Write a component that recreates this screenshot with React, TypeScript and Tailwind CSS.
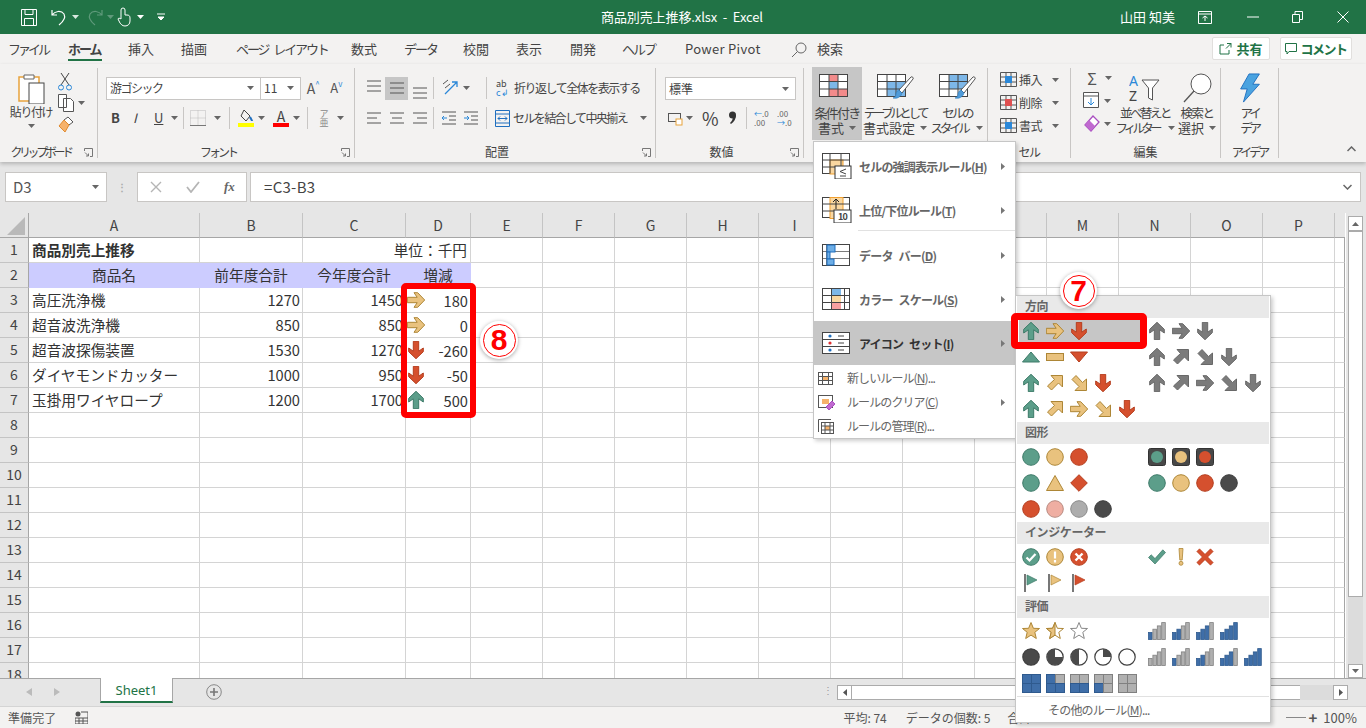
import React from "react";

const Caret = ({ c = "#666" }: { c?: string }) => (
  <svg width="7" height="4" viewBox="0 0 7 4" className="shrink-0"><path d="M0 0h7L3.5 4z" fill={c} /></svg>
);

const COL: Record<string, [string, string]> = {
  g: ["#5c9e8a", "#3d7a68"],
  y: ["#e9c27e", "#ad8636"],
  r: ["#d5502e", "#b53e1e"],
  k: ["#7b7b7b", "#686868"],
  d: ["#4a4a4a", "#3c3c3c"],
};

const Arr = ({ c, a = 0 }: { c: string; a?: number }) => (
  <svg width="18" height="18" viewBox="-9 -9 18 18">
    <polygon transform={`rotate(${a})`} points="0,-8.7 7.3,-1.7 7.3,2 2.7,-1.2 2.7,8.7 -2.7,8.7 -2.7,-1.2 -7.3,2 -7.3,-1.7" fill={COL[c][0]} stroke={COL[c][1]} strokeWidth="1" />
  </svg>
);
const Dia = ({ c, a = 0 }: { c: string; a?: number }) => (
  <svg width="18" height="18" viewBox="-9 -9 18 18">
    <polygon transform={`rotate(${a})`} points="-4,-7.5 7.5,-7.5 7.5,4 3.5,0 -3.5,7 -7.5,3 -0.5,-3.5" fill={COL[c][0]} stroke={COL[c][1]} strokeWidth="1" />
  </svg>
);
const Tri = ({ c, down }: { c: string; down?: boolean }) => (
  <svg width="18" height="14" viewBox="0 0 18 14"><polygon points={down ? "0.5,2 17.5,2 9,12" : "9,2 17.5,12 0.5,12"} fill={COL[c][0]} stroke={COL[c][1]} /></svg>
);
const Bar = () => (
  <svg width="18" height="10" viewBox="0 0 18 10"><rect x="0.5" y="1.5" width="17" height="7" fill={COL.y[0]} stroke={COL.y[1]} /></svg>
);
const Dot = ({ c, f }: { c?: string; f?: [string, string] }) => {
  const v = f || COL[c || "g"];
  return <svg width="18" height="18" viewBox="0 0 18 18"><circle cx="9" cy="9" r="8.3" fill={v[0]} stroke={v[1]} /></svg>;
};
const TriS = () => (
  <svg width="18" height="18" viewBox="0 0 18 18"><polygon points="9,1.5 17.5,16.5 0.5,16.5" fill={COL.y[0]} stroke={COL.y[1]} /></svg>
);
const Rhomb = () => (
  <svg width="18" height="18" viewBox="0 0 18 18"><polygon points="9,0.7 17.3,9 9,17.3 0.7,9" fill={COL.r[0]} stroke={COL.r[1]} strokeLinejoin="round" /></svg>
);
const Light = ({ c }: { c: string }) => (
  <svg width="18" height="18" viewBox="0 0 18 18"><rect x="0.5" y="0.5" width="17" height="17" rx="2" fill="#484848" stroke="#333" /><circle cx="9" cy="9" r="6" fill={COL[c][0]} /></svg>
);
const CircI = ({ c, k }: { c: string; k: string }) => (
  <svg width="18" height="18" viewBox="0 0 18 18">
    <circle cx="9" cy="9" r="8.3" fill={COL[c][0]} stroke={COL[c][1]} />
    {k === "v" && <path d="M4.5 9.5l3 3 6-6.5" fill="none" stroke="#fff" strokeWidth="2.2" />}
    {k === "!" && <path d="M9 3.5v7M9 12v2.5" fill="none" stroke="#fff" strokeWidth="2.2" />}
    {k === "x" && <path d="M5.5 5.5l7 7M12.5 5.5l-7 7" fill="none" stroke="#fff" strokeWidth="2.4" />}
  </svg>
);
const Check = () => (
  <svg width="18" height="18" viewBox="0 0 18 18"><path d="M0.5 9.5l2.7-2.7 3.8 3.8L14.8 1.8 17.5 4.5 7 16z" fill={COL.g[0]} stroke={COL.g[1]} strokeWidth=".7" /></svg>
);
const Excl = () => (
  <svg width="18" height="18" viewBox="0 0 18 18"><path d="M7 0.5h4L10.2 12H7.8z" fill={COL.y[0]} stroke={COL.y[1]} strokeWidth=".8" /><circle cx="9" cy="15.3" r="2" fill={COL.y[0]} stroke={COL.y[1]} strokeWidth=".8" /></svg>
);
const Cross = () => (
  <svg width="18" height="18" viewBox="0 0 18 18"><path d="M0.8 3.5l2.7-2.7L9 6.3 14.5 .8l2.7 2.7L11.7 9l5.5 5.5-2.7 2.7L9 11.7l-5.5 5.5-2.7-2.7L6.3 9z" fill={COL.r[0]} stroke={COL.r[1]} strokeWidth=".6" /></svg>
);
const Flag = ({ c }: { c: string }) => (
  <svg width="18" height="20" viewBox="0 0 18 20"><rect x="2" y="1" width="2" height="18" fill="#777" /><polygon points="5,2 15,7 5,12" fill={COL[c][0]} stroke={COL[c][1]} strokeWidth=".7" /></svg>
);
const STAR = "0,-8.5 2.4,-2.7 8.5,-2.5 3.8,1.3 5.3,7.5 0,4.1 -5.3,7.5 -3.8,1.3 -8.5,-2.5 -2.4,-2.7";
const Star = ({ f }: { f: number }) => (
  <svg width="18" height="18" viewBox="-9 -9 18 18">
    <polygon points={STAR} fill={f === 2 ? COL.y[0] : "#fff"} stroke={f === 0 ? "#888" : COL.y[1]} />
    {f === 1 && <polygon points="0,-8.5 0,4.1 -5.3,7.5 -3.8,1.3 -8.5,-2.5 -2.4,-2.7" fill={COL.y[0]} stroke={COL.y[1]} />}
  </svg>
);
const Ball = ({ n }: { n: number }) => {
  const paths: Record<number, string> = { 3: "M9 9V1A8 8 0 1 0 17 9z", 2: "M9 1A8 8 0 0 0 9 17z", 1: "M9 9V1A8 8 0 0 1 17 9z" };
  return (
    <svg width="18" height="18" viewBox="0 0 18 18">
      <circle cx="9" cy="9" r="8.2" fill={n === 4 ? "#4a4a4a" : "#fff"} stroke="#404040" strokeWidth="1.2" />
      {paths[n] && <path d={paths[n]} fill="#4a4a4a" />}
    </svg>
  );
};
const Sig = ({ n }: { n: number }) => (
  <svg width="18" height="18" viewBox="0 0 18 18">
    {[0, 1, 2, 3].map((i) => (
      <rect key={i} x={0.5 + i * 4.4} y={10.5 - i * 3.3} width="3.6" height={7 + i * 3.3} fill={i < n ? "#3f6ea8" : "#b0b0b0"} stroke={i < n ? "#2f5a8e" : "#808080"} strokeWidth=".8" />
    ))}
  </svg>
);
const Quad = ({ b }: { b: number[] }) => (
  <svg width="19" height="19" viewBox="0 0 19 19">
    {[0, 1, 2, 3].map((i) => (
      <rect key={i} x={0.5 + (i % 2) * 9} y={0.5 + (i > 1 ? 9 : 0)} width="9" height="9" fill={b[i] ? "#3f6ea8" : "#b0b0b0"} stroke={b[i] ? "#2f5a8e" : "#808080"} />
    ))}
  </svg>
);

const Cells = ({ items }: { items: React.ReactNode[] }) => (
  <>{items.map((x, i) => <div key={i} className="w-[24px] h-full flex items-center justify-center shrink-0">{x}</div>)}</>
);
const IRow = ({ l, r, sel }: { l: React.ReactNode[]; r?: React.ReactNode[]; sel?: boolean }) => (
  <div className="flex h-[26px] pl-[3px] items-center">
    <div className={`flex w-[126px] h-full ${sel ? "bg-[#c6c6c6]" : ""}`}><Cells items={l} /></div>
    <div className="flex h-full"><Cells items={r || []} /></div>
  </div>
);
const SecHead = ({ t }: { t: string }) => (
  <div className="h-[22px] mx-px bg-[#e9e9e9] pl-[8px] text-[12px] leading-[20px] font-bold text-[#666] tracking-[-0.4px]">{t}</div>
);

const Brush = ({ x = 14 }: { x?: number }) => (
  <g transform={`translate(${x} 0)`}>
    <path d="M20 3c1-1 3 1 2 2L11 19l-3-3z" fill="#fff" stroke="#555" />
    <path d="M8 16l3 3c-1 4-5 6-9 5 2-1 3-2 3-4 0-2 2-4 3-4z" fill="#4f9bd9" stroke="#2b78b8" strokeWidth=".6" />
  </g>
);

const GridIc = ({ fill, brush }: { fill?: React.ReactNode; brush?: boolean }) => (
  <svg width="36" height="27" viewBox="0 0 36 27" className="overflow-visible">
    <rect x=".5" y=".5" width="28" height="22" fill="#fff" stroke="#444" />
    {fill}
    <path d="M.5 7.5h28M.5 15h28M10 .5v22M19 .5v22" stroke="#444" fill="none" />
    {brush && <Brush />}
  </svg>
);

const Big = ({ icon, l1, l2, w, active, c1 = "", c2 = "" }: { icon: React.ReactNode; l1: string; l2: React.ReactNode; w: string; active?: boolean; c1?: string; c2?: string }) => (
  <div className={`flex flex-col items-center h-[73px] -mt-px pt-[7px] shrink-0 ${w} ${active ? "bg-[#c6c6c6]" : ""}`}>
    <div className="h-[27px] flex items-center justify-center">{icon}</div>
    <div className={`leading-[15px] mt-[4px] text-[#444] whitespace-nowrap text-center ${c1 || "text-[13px]"}`}>{l1}</div>
    <div className={`leading-[15px] text-[#444] whitespace-nowrap flex items-center gap-[5px] ${c2 || "text-[13px]"}`}>{l2}</div>
  </div>
);

const Launcher = () => (
  <svg width="9" height="9" viewBox="0 0 9 9" className="absolute right-[4px] top-[4px]"><path d="M.5 3V.5H8.5V8.5H6M1 4.5l3.5 3.5M4.5 5.5V8H2" fill="none" stroke="#777" /></svg>
);

const Group = ({ w, label, launcher, lc = "", children }: { w: string; label: string; launcher?: boolean; lc?: string; children: React.ReactNode }) => (
  <div className={`flex flex-col h-[90px] shrink-0 border-r border-[#c8c6c4] ${w}`}>
    <div className="h-[76px] flex flex-col shrink-0">{children}</div>
    <div className={`relative flex-1 text-center text-[12px] leading-[15px] text-[#444] whitespace-nowrap ${launcher ? "pr-[16px]" : ""} ${lc}`}>
      {label}
      {launcher && <Launcher />}
    </div>
  </div>
);

const Sep = () => <div className="w-px h-[22px] bg-[#c8c6c4] shrink-0" />;

const Lines = ({ al }: { al: "l" | "c" | "r" | "f" }) => {
  const d: Record<string, string> = {
    f: "M2 2h14M2 7h14M2 12h14",
    l: "M2 2h14M2 7h10M2 12h14",
    c: "M2 2h14M4 7h10M2 12h14",
    r: "M2 2h14M6 7h10M2 12h14",
  };
  return <svg width="18" height="14" viewBox="0 0 18 14"><path d={d[al]} stroke="#555" fill="none" /></svg>;
};

const gridCols = ["A", "B", "C", "D", "E", "F", "G", "H", "I", "J", "K", "L", "M", "N", "O", "P", ""];

const data: [string, string, string, string, React.ReactNode][] = [
  ["高圧洗浄機", "1270", "1450", "180", <Arr c="y" a={90} />],
  ["超音波洗浄機", "850", "850", "0", <Arr c="y" a={90} />],
  ["超音波探傷装置", "1530", "1270", "-260", <Arr c="r" a={180} />],
  ["ダイヤモンドカッター", "1000", "950", "-50", <Arr c="r" a={180} />],
  ["玉掛用ワイヤロープ", "1200", "1700", "500", <Arr c="g" />],
];

const cellB = "border-r border-b border-[#d4d4d4] h-[25px] text-[14.67px] leading-[23px] text-[#333] whitespace-nowrap";

function Sheet() {
  const out: React.ReactNode[] = [];
  out.push(
    <div key="corner" className="h-[25px] bg-[#e6e6e6] border-r border-b border-[#a6a6a6] flex items-end justify-end pr-[3px] pb-[2px]">
      <svg width="18" height="18" viewBox="0 0 18 18"><polygon points="18,0 18,18 0,18" fill="#b9b9b9" /></svg>
    </div>
  );
  gridCols.forEach((c, i) =>
    out.push(<div key={"h" + i} className={`h-[25px] bg-[#e6e6e6] border-b border-b-[#a6a6a6] text-center text-[14px] leading-[24px] text-[#444] ${i === 16 ? "" : "border-r border-r-[#c4c4c4]"}`}>{c}</div>)
  );
  for (let r = 1; r <= 18; r++) {
    out.push(<div key={"r" + r} className="h-[25px] bg-[#e6e6e6] border-r border-b border-r-[#a6a6a6] border-b-[#c4c4c4] text-center text-[14px] leading-[23px] text-[#444]">{r}</div>);
    for (let c = 0; c < 17; c++) {
      let node: React.ReactNode = <div key={c} className={`${cellB} ${c === 16 ? "border-r-[#a6a6a6]" : ""}`} />;
      if (r === 1 && c === 0) node = <div key={c} className={`${cellB} pl-[3px] font-bold`}>商品別売上推移</div>;
      if (r === 1 && c === 2) node = <div key={c} className={`${cellB} border-r-0`} />;
      if (r === 1 && c === 3) node = <div key={c} className={`${cellB} flex justify-end pr-[3px]`}>単位：千円</div>;
      if (r === 2 && c < 4) node = <div key={c} className={`${cellB} bg-[#ccccff] border-transparent text-center`}>{["商品名", "前年度合計", "今年度合計", "増減"][c]}</div>;
      if (r >= 3 && r <= 7 && c < 4) {
        const row = data[r - 3];
        if (c === 0) node = <div key={c} className={`${cellB} pl-[3px]`}>{row[0]}</div>;
        if (c === 1 || c === 2) node = <div key={c} className={`${cellB} text-right pr-[2px]`}>{row[c]}</div>;
        if (c === 3) node = <div key={c} className={`${cellB} flex items-center justify-between pl-[1px] pr-[2px]`}>{row[4]}<span>{row[3]}</span></div>;
      }
      out.push(node);
    }
  }
  return <div className="mt-px bg-white grid grid-cols-[29px_171px_103px_103px_65px_repeat(12,72px)_10px] content-start">{out}</div>;
}

const Tab = ({ t, cls = "" }: { t: string; cls?: string }) => (
  <div className={`text-[13px] leading-[30px] text-[#444] whitespace-nowrap ${cls}`}>{t}</div>
);

const Small = ({ t, k, e, ic, arr }: { t: string; k: string; e: string; ic: React.ReactNode; arr?: boolean }) => (
  <div className="h-[24px] flex items-center pl-[4px] pr-[10px] text-[12px] text-[#666] tracking-[-0.9px]">
    <div className="w-[29px] flex">{ic}</div>
    <span className="flex-1 whitespace-nowrap">{t}<span className="underline">{k}</span>{e}</span>
    {arr && <svg width="4" height="7" viewBox="0 0 4 7"><path d="M0 0v7l4-3.5z" fill="#777" /></svg>}
  </div>
);

const Large = ({ ic, t, k, dark }: { ic: React.ReactNode; t: string; k: string; dark?: boolean }) => (
  <div className={`h-[44px] flex items-center pl-[8px] pr-[10px] text-[12px] font-bold tracking-[-0.8px] [word-spacing:4px] ${dark ? "bg-[#c6c6c6] text-[#333]" : "text-[#666]"}`}>
    <div className="w-[37px] flex">{ic}</div>
    <span className="flex-1 whitespace-nowrap pt-[2px]">{t}(<span className="underline">{k}</span>)</span>
    <svg width="4" height="7" viewBox="0 0 4 7"><path d="M0 0v7l4-3.5z" fill="#777" /></svg>
  </div>
);

export default function App() {
  return (
    <div className="relative w-[1366px] h-[728px] overflow-hidden flex flex-col bg-white font-['Noto_Sans_CJK_JP','Noto_Sans',sans-serif]">
      {/* Title bar */}
      <div className="h-[34px] shrink-0 bg-[#217346] flex items-center text-white relative">
        <div className="flex items-center w-[500px] pl-[21px]">
          <svg width="16" height="17" viewBox="0 0 16 17"><path d="M.5.5h15v16H.5zM4 .5v5h8v-5M3.5 16.5v-7h9v7" fill="none" stroke="#fff" /></svg>
          <svg width="18" height="18" viewBox="0 0 18 18" className="ml-[13px]"><path d="M2 2v5h5M2 7c3-4 9-5 12-1 2 4 0 7-5 11" fill="none" stroke="#fff" strokeWidth="1.2" /></svg>
          <span className="ml-[4px]"><Caret c="#d8e8df" /></span>
          <svg width="18" height="18" viewBox="0 0 18 18" className="ml-[7px]"><path d="M16 2v5h-5M16 7c-3-4-9-5-12-1-2 4 0 7 5 11" fill="none" stroke="#5f9a7b" strokeWidth="1.2" /></svg>
          <span className="ml-[3px]"><Caret c="#5f9a7b" /></span>
          <svg width="14" height="20" viewBox="0 0 14 20" className="ml-[3px]"><path d="M4 9V3a2 2 0 0 1 4 0v5h2c2 0 3 1 3 3v3c0 3-2 5-5 5s-4-2-5-3L1 12c0-1 2-1 3 0z" fill="none" stroke="#fff" /></svg>
          <span className="ml-[6px]"><Caret c="#fff" /></span>
          <svg width="8" height="8" viewBox="0 0 8 8" className="ml-[13px]"><path d="M0 1h8M1 4h6L4 7z" stroke="#fff" fill="#fff" /></svg>
        </div>
        <div className="absolute left-[601px] text-[13px] leading-[34px] tracking-[-0.1px] whitespace-pre">商品別売上推移.xlsx  -  Excel</div>
        <div className="absolute left-[1120px] text-[13px] leading-[34px]">山田 知美</div>
        <div className="ml-auto flex items-center">
          <svg width="14" height="13" viewBox="0 0 14 13"><path d="M.5.5h13v12H.5zM.5 3h13M7 10V5M4.5 7L7 5l2.5 2" fill="none" stroke="#fff" /></svg>
          <svg width="12" height="2" viewBox="0 0 12 2" className="ml-[35px]"><path d="M0 1h12" stroke="#fff" /></svg>
          <svg width="11" height="12" viewBox="0 0 11 12" className="ml-[33px]"><path d="M.5 3.5h7v8h-7zM3 3.5v-3h7.5v8H8" fill="none" stroke="#fff" /></svg>
          <svg width="12" height="12" viewBox="0 0 12 12" className="ml-[34px] mr-[17px]"><path d="M.5.5l11 11M11.5.5l-11 11" stroke="#fff" /></svg>
        </div>
      </div>

      {/* Tabs */}
      <div className="h-[30px] shrink-0 bg-[#f3f2f1] flex items-start pl-[8px] relative">
        <Tab t="ファイル" cls="tracking-[-3px] w-[60px]" />
        <div className="relative w-[60px]">
          <Tab t="ホーム" cls="font-bold tracking-[-2px] text-[#222]" />
          <div className="absolute left-0 top-[25px] w-[34px] h-[2px] bg-[#217346]" />
        </div>
        <Tab t="挿入" cls="w-[53px]" />
        <Tab t="描画" cls="w-[55px]" />
        <Tab t="ページ レイアウト" cls="tracking-[-2.1px] [word-spacing:4px] w-[115px]" />
        <Tab t="数式" cls="w-[53px]" />
        <Tab t="データ" cls="tracking-[-2px] w-[59px]" />
        <Tab t="校閲" cls="w-[53px]" />
        <Tab t="表示" cls="w-[54px]" />
        <Tab t="開発" cls="w-[52px]" />
        <Tab t="ヘルプ" cls="tracking-[-2px] w-[63px]" />
        <Tab t="Power Pivot" cls="w-[106px] tracking-[0.3px]" />
        <svg width="16" height="16" viewBox="0 0 16 16" className="mt-[8px]"><circle cx="10" cy="6" r="5" fill="none" stroke="#666" /><path d="M6.5 9.5L1 15" stroke="#666" /></svg>
        <Tab t="検索" cls="ml-[10px]" />
        <div className="ml-auto flex mt-[3px] pr-[14px] gap-[10px]">
          <div className="w-[58px] h-[23px] bg-white border border-[#e1dfdd] rounded-[2px] flex items-center justify-center gap-[4px] text-[13px] font-bold text-[#217346]">
            <svg width="13" height="13" viewBox="0 0 13 13"><path d="M8 1.5h4v4M12 1.5L7 6.5M5 3H1v9h9V8" fill="none" stroke="#217346" /></svg>共有
          </div>
          <div className="w-[72px] h-[23px] bg-white border border-[#e1dfdd] rounded-[2px] flex items-center justify-center gap-[3px] text-[13px] font-bold text-[#217346] tracking-[-1.5px]">
            <svg width="12" height="12" viewBox="0 0 12 12"><path d="M.5.5h11v8H4L2 11V8.5H.5z" fill="none" stroke="#217346" /></svg>コメント
          </div>
        </div>
      </div>

      {/* Ribbon */}
      <div className="h-[98px] shrink-0 bg-[#f3f2f1] flex pt-[4px] relative z-10 shadow-[0_2px_4px_rgba(0,0,0,0.22)]">
        <Group w="w-[98px]" label="クリップボード" launcher lc="tracking-[-3.4px]">
          <div className="flex pl-[9px] pt-[4px]">
            <div className="w-[44px] flex flex-col items-center">
              <svg width="30" height="32" viewBox="0 0 30 32"><path d="M3 5h20v24H3z" fill="#fff" stroke="#e8a33c" strokeWidth="1.5" /><path d="M8 3h10v4H8z" fill="#fff" stroke="#666" /><rect x="13" y="11" width="15" height="21" fill="#fff" stroke="#444" /></svg>
              <div className="text-[12px] leading-[15px] text-[#444] tracking-[-1.4px] whitespace-nowrap">貼り付け</div>
              <div className="mt-[5px]"><Caret /></div>
            </div>
            <div className="ml-[5px] flex flex-col gap-[3px]">
              <svg width="14" height="19" viewBox="0 0 14 19"><path d="M3 1l8 12M11 1L3 13" stroke="#444" fill="none" /><circle cx="3" cy="15.5" r="2.5" fill="none" stroke="#2b88d8" /><circle cx="11" cy="15.5" r="2.5" fill="none" stroke="#2b88d8" /></svg>
              <div className="flex items-center gap-[3px]">
                <svg width="17" height="18" viewBox="0 0 17 18"><path d="M.5.5h8v13h-8zM5.5 4.5h7l3 3v10h-10z" fill="#fff" stroke="#555" /></svg>
                <Caret />
              </div>
              <svg width="17" height="18" viewBox="0 0 17 18"><path d="M10 2l5 5-4 3-5-5z" fill="#fff" stroke="#555" /><path d="M6 5l5 5-4 7-6-6z" fill="#f6b26b" stroke="#e08a2e" /></svg>
            </div>
          </div>
        </Group>

        <Group w="w-[257px]" label="フォント" launcher lc="tracking-[-3px]">
          <div className="pl-[8px] pt-[9px] flex items-center h-[31px]">
            <div className="w-[157px] h-[23px] bg-white border border-[#c8c6c4] flex items-center justify-between px-[3px] text-[12px] text-[#444] tracking-[-1.5px]">游ゴシック<span className="mr-[3px]"><Caret /></span></div>
            <div className="w-[40px] h-[23px] bg-white border border-l-0 border-[#c8c6c4] flex items-center justify-between px-[3px] text-[12px] text-[#444]">11<span className="mr-[3px]"><Caret /></span></div>
            <div className="ml-[6px] text-[14px] text-[#555] flex items-start w-[24px]">A<span className="text-[#2b88d8] text-[8px] leading-[12px]">^</span></div>
            <div className="text-[13px] text-[#555] flex items-start w-[24px]">A<span className="text-[#2b88d8] text-[8px] leading-[12px]">v</span></div>
          </div>
          <div className="pl-[13px] mt-[7px] flex items-center h-[24px] text-[#444]">
            <span className="w-[22px] text-[13px] font-bold">B</span>
            <span className="w-[21px] text-[13px] italic">I</span>
            <span className="w-[17px] text-[13px] underline">U</span>
            <span className="w-[12px]"><Caret /></span>
            <Sep />
            <svg width="16" height="16" viewBox="0 0 16 16" className="ml-[6px]"><path d="M.5.5h15v15H.5zM8 .5v15M.5 8h15" fill="none" stroke="#bbb" strokeDasharray="1 1" /><path d="M0 15.5h16" stroke="#777" /></svg>
            <span className="ml-[8px] mr-[8px]"><Caret /></span>
            <Sep />
            <div className="ml-[8px] w-[16px] flex flex-col items-center">
              <svg width="15" height="14" viewBox="0 0 15 14"><path d="M5 1l6 6-4 5-5-5z" fill="none" stroke="#444" /><path d="M11 8c1 2 2 3 2 4" stroke="#1f6fbf" strokeWidth="2" fill="none" /></svg>
              <div className="w-[16px] h-[4px] bg-[#ffff00]" />
            </div>
            <span className="ml-[4px]"><Caret /></span>
            <div className="ml-[8px] w-[16px] flex flex-col items-center">
              <span className="text-[14px] leading-[14px]">A</span>
              <div className="w-[16px] h-[4px] bg-[#ff0000]" />
            </div>
            <span className="ml-[4px] mr-[7px]"><Caret /></span>
            <Sep />
            <div className="ml-[8px] w-[16px] text-[9px] leading-[9px] text-center text-[#888]">ア<br />亜</div>
            <span className="ml-[5px]"><Caret /></span>
          </div>
        </Group>

        <Group w="w-[301px]" label="配置" launcher>
          <div className="pl-[7px] pt-[8px] flex items-center h-[32px]">
            <div className="w-[23px] h-[23px] flex items-start justify-center pt-[2px]"><Lines al="f" /></div>
            <div className="w-[23px] h-[23px] bg-[#c6c6c6] flex items-center justify-center"><Lines al="f" /></div>
            <div className="w-[23px] h-[23px] flex items-end justify-center"><Lines al="f" /></div>
            <div className="ml-[2px]"><Sep /></div>
            <svg width="18" height="18" viewBox="0 0 18 18" className="ml-[8px]"><path d="M3 15L15 3M10 3h5v5" fill="none" stroke="#2b88d8" strokeWidth="1.3" /><path d="M1 5l5-4M3 9l5-4" fill="none" stroke="#555" /></svg>
            <span className="ml-[3px] mr-[16px]"><Caret /></span>
            <Sep />
            <div className="ml-[9px] w-[16px] text-[9px] leading-[9px] text-[#444]">ab<br /><span className="text-[#2b88d8]">c↲</span></div>
            <div className="ml-[2px] text-[12px] text-[#444] tracking-[-1.5px] whitespace-nowrap">折り返して全体を表示する</div>
          </div>
          <div className="pl-[7px] mt-[6px] flex items-center h-[24px]">
            <div className="w-[23px] flex justify-center"><Lines al="l" /></div>
            <div className="w-[23px] flex justify-center"><Lines al="c" /></div>
            <div className="w-[23px] flex justify-center"><Lines al="r" /></div>
            <div className="ml-[2px]"><Sep /></div>
            <svg width="16" height="14" viewBox="0 0 16 14" className="ml-[7px]"><path d="M1 1h14M8 5h7M8 9h7M1 13h14" stroke="#555" fill="none" /><path d="M6 7H1M3 5L1 7l2 2" stroke="#2b88d8" fill="none" /></svg>
            <svg width="16" height="14" viewBox="0 0 16 14" className="ml-[6px] mr-[7px]"><path d="M1 1h14M8 5h7M8 9h7M1 13h14" stroke="#555" fill="none" /><path d="M1 7h5M4 5l2 2-2 2" stroke="#2b88d8" fill="none" /></svg>
            <Sep />
            <svg width="15" height="17" viewBox="0 0 15 17" className="ml-[8px]"><path d="M.5.5h14v16H.5zM.5 4h14M.5 13h14" fill="none" stroke="#1f6fbf" /><path d="M3 8.5h9M5 6.5l-2 2 2 2M10 6.5l2 2-2 2" stroke="#1f6fbf" fill="none" /></svg>
            <div className="ml-[3px] text-[12px] text-[#444] tracking-[-1.6px] whitespace-nowrap w-[127px]">セルを結合して中央揃え</div>
            <Caret />
          </div>
        </Group>

        <Group w="w-[148px]" label="数値" launcher>
          <div className="pl-[9px] pt-[9px] h-[32px]">
            <div className="w-[131px] h-[23px] bg-white border border-[#c8c6c4] flex items-center justify-between px-[3px] text-[12px] text-[#444]">標準<span className="mr-[3px]"><Caret /></span></div>
          </div>
          <div className="pl-[12px] mt-[6px] flex items-center h-[24px] text-[#444]">
            <svg width="15" height="15" viewBox="0 0 15 15"><rect x=".5" y="2.5" width="12" height="8" fill="none" stroke="#555" /><rect x="8" y="8" width="6" height="6" fill="#fff" stroke="#e8a33c" /></svg>
            <span className="ml-[3px]"><Caret /></span>
            <span className="ml-[9px] text-[18px] leading-[18px] w-[20px]">%</span>
            <svg width="9" height="14" viewBox="0 0 9 14" className="ml-[6px]"><circle cx="4.5" cy="4" r="3.5" fill="#333" /><path d="M8 4c0 4-2 7-5 9l-1-1c2-2 3-4 3-7z" fill="#333" /></svg>
            <span className="ml-[9px]"><Sep /></span>
            <div className="ml-[7px] w-[18px] text-[8px] leading-[9px] text-[#666]"><span className="text-[#2b88d8]">←</span>.0<br />.00</div>
            <div className="ml-[5px] w-[18px] text-[8px] leading-[9px] text-[#666]">.00<br /><span className="text-[#2b88d8]">→</span>.0</div>
          </div>
        </Group>

        <Group w="w-[184px]" label="スタイル" lc="tracking-[-3px]">
          <div className="flex pl-[8px]">
            <Big active w="w-[50px]" c1="text-[13px] tracking-[-1.8px]" icon={<GridIc fill={<><rect x="10" y="1" width="9" height="6.5" fill="#f28b8b" /><rect x="10" y="7.5" width="9" height="7.5" fill="#7db7e8" /><rect x="10" y="15" width="18" height="7" fill="#f28b8b" /></>} />} l1="条件付き" l2={<>書式<Caret /></>} />
            <Big w="w-[66px]" c1="text-[12.5px] tracking-[-3.4px]" icon={<GridIc brush fill={<rect x="10" y="7.5" width="18" height="14.5" fill="#7db7e8" />} />} l1="テーブルとして" l2={<>書式設定<Caret /></>} />
            <Big w="w-[58px]" c1="text-[12.5px] tracking-[-2.7px]" c2="text-[12.5px] tracking-[-3.3px]" icon={<GridIc brush fill={<rect x="10" y="1" width="18" height="14" fill="#7db7e8" />} />} l1="セルの" l2={<>スタイル<span className="ml-[4px]"><Caret /></span></>} />
          </div>
        </Group>

        <Group w="w-[83px]" label="セル" lc="tracking-[-1.5px]">
          <div className="pl-[12px] flex flex-col">
            {[["挿入", "#2b88d8"], ["削除", "#e05050"], ["書式", "#2b88d8"]].map(([t, c]) => (
              <div key={t} className="h-[23px] flex items-center text-[12px] text-[#444]">
                <svg width="17" height="15" viewBox="0 0 17 15"><path d="M.5.5h16v14H.5zM6 .5v14M11 .5v14M.5 5h16M.5 10h16" fill="none" stroke="#555" /><rect x="5" y="4" width="7" height="7" fill={c} /></svg>
                <span className="ml-[2px] w-[33px] tracking-[-0.4px]">{t}</span>
                <Caret />
              </div>
            ))}
          </div>
        </Group>

        <Group w="w-[150px]" label="編集">
          <div className="flex pl-[12px]">
            <div className="flex flex-col w-[32px] gap-[4px]">
              <div className="flex items-center h-[19px] gap-[4px]"><span className="w-[18px] text-[16px] leading-[18px] text-center text-[#555]">Σ</span><Caret /></div>
              <div className="flex items-center h-[19px] gap-[4px]">
                <svg width="17" height="17" viewBox="0 0 17 17"><path d="M.5.5h15v15H.5zM.5 4h15" fill="#fff" stroke="#555" /><path d="M8 6v7M5 10l3 3 3-3" fill="none" stroke="#2b88d8" /></svg><Caret />
              </div>
              <div className="flex items-center h-[19px] gap-[4px]">
                <svg width="17" height="17" viewBox="0 0 17 17"><path d="M10 1l6 6-8 9-6-6z" fill="#fff" stroke="#a94fc0" strokeWidth="1.3" /><path d="M2 10l4-5 6 6-4 5z" fill="#c06ad0" /></svg><Caret />
              </div>
            </div>
            <div className="ml-[3px] w-[58px]">
              <Big w="w-[58px]" c1="text-[12.5px] tracking-[-2.5px]" c2="text-[12.5px] tracking-[-3.8px]" icon={<svg width="32" height="30" viewBox="0 0 32 30"><text x="0" y="13" fontSize="14" fill="#2b88d8" fontFamily="Noto Sans">A</text><text x="0" y="28" fontSize="14" fill="#444" fontFamily="Noto Sans">Z</text><path d="M13 7h17l-6.5 8v12l-4-2V15z" fill="#fff" stroke="#555" /></svg>} l1="並べ替えと" l2={<>フィルター<span className="ml-[4px]"><Caret /></span></>} />
            </div>
            <div className="w-[46px]">
              <Big w="w-[46px]" c1="text-[12.5px] tracking-[-1.5px]" icon={<svg width="32" height="30" viewBox="0 0 32 30"><circle cx="20" cy="11" r="10" fill="#fff" stroke="#555" /><path d="M13 18L3 29" stroke="#555" strokeWidth="1.3" /></svg>} l1="検索と" l2={<>選択<Caret /></>} />
            </div>
          </div>
        </Group>

        <Group w="w-[58px]" label="アイデア" lc="tracking-[-3px]">
          <div className="flex justify-center">
            <Big w="w-[50px]" c1="text-[12.5px] tracking-[-3.3px]" c2="text-[12.5px] tracking-[-3.3px]" icon={<svg width="24" height="30" viewBox="0 0 24 32"><path d="M11 1h11l-7 11h7L5 31l4-14H2z" fill="#4aa3e0" stroke="#1f6fbf" /></svg>} l1="アイ" l2="デア" />
          </div>
        </Group>
        <div className="flex-1 flex items-end justify-end pr-[10px] pb-[6px] h-[90px]">
          <svg width="9" height="6" viewBox="0 0 9 6"><path d="M.5 5L4.5 1l4 4" fill="none" stroke="#666" strokeWidth="1.5" /></svg>
        </div>
      </div>

      {/* Formula bar */}
      <div className="h-[50px] shrink-0 bg-[#e6e6e6] flex items-center pl-[5px] pr-[5px]">
        <div className="w-[102px] h-[30px] bg-white border border-[#c8c6c4] flex items-center justify-between pl-[7px] pr-[7px] text-[15px] text-[#555]">D3<Caret /></div>
        <div className="w-[30px] text-center text-[#aaa] text-[10px] leading-[8px] font-bold">⋮</div>
        <div className="w-[110px] h-[30px] bg-white border border-[#c8c6c4] flex items-center pl-[12px] gap-[24px]">
          <svg width="12" height="12" viewBox="0 0 12 12"><path d="M1 1l10 10M11 1L1 11" stroke="#b5b5b5" strokeWidth="1.4" /></svg>
          <svg width="14" height="12" viewBox="0 0 14 12"><path d="M1 6l4 5 8-10" fill="none" stroke="#b5b5b5" strokeWidth="1.8" /></svg>
          <span className="font-['Liberation_Serif',serif] italic font-bold text-[13px] text-[#666]">fx</span>
        </div>
        <div className="ml-[3px] flex-1 h-[30px] bg-white border border-[#c8c6c4] flex items-center justify-between pl-[13px] pr-[8px] text-[15px] tracking-[0.3px] text-[#444]">
          =C3-B3
          <svg width="9" height="6" viewBox="0 0 9 6"><path d="M.5 1l4 4 4-4" fill="none" stroke="#666" strokeWidth="1.5" /></svg>
        </div>
      </div>

      {/* Sheet */}
      <div className="flex-1 min-h-0 flex overflow-hidden bg-[#e6e6e6]">
        <div className="w-[1346px] shrink-0 overflow-hidden"><Sheet /></div>
        <div className="ml-[2px] w-[15px] flex flex-col pt-[4px]">
          <div className="h-[15px] bg-white border border-[#ababab] flex items-center justify-center"><svg width="7" height="4" viewBox="0 0 7 4"><path d="M3.5 0L7 4H0z" fill="#666" /></svg></div>
          <div className="h-[366px] bg-white border border-[#ababab]" />
          <div className="flex-1 bg-[#dcdcdc]" />
          <div className="h-[14px] bg-white border border-[#ababab] flex items-center justify-center"><Caret /></div>
        </div>
      </div>

      {/* Sheet tabs */}
      <div className="h-[28px] shrink-0 bg-[#e6e6e6] border-t border-[#a6a6a6] flex items-start relative z-0">
        <svg width="6" height="8" viewBox="0 0 6 8" className="ml-[26px] mt-[9px]"><path d="M6 0v8L0 4z" fill="#bbb" /></svg>
        <svg width="6" height="8" viewBox="0 0 6 8" className="ml-[22px] mt-[9px]"><path d="M0 0v8l6-4z" fill="#bbb" /></svg>
        <div className="ml-[40px] -mt-px w-[73px] h-[25px] bg-white border-x border-[#a6a6a6] border-b-2 border-b-[#217346] text-center text-[13px] leading-[25px] text-[#217346] font-['Noto_Sans',sans-serif]">Sheet1</div>
        <svg width="16" height="16" viewBox="0 0 16 16" className="ml-[33px] mt-[5px]"><circle cx="8" cy="8" r="7.3" fill="none" stroke="#888" /><path d="M4 8h8M8 4v8" stroke="#777" strokeWidth="1.6" /></svg>
        <div className="ml-[601px] mt-[7px] w-[4px] text-[#999] text-[10px] leading-[7px]">⋮</div>
        <div className="ml-[10px] mt-[6px] w-[15px] h-[15px] bg-white border border-[#ababab] flex items-center justify-center"><svg width="4" height="7" viewBox="0 0 4 7"><path d="M4 0v7L0 3.5z" fill="#555" /></svg></div>
        <div className="mt-[6px] w-[448px] h-[15px] bg-white border-y border-[#ababab]" />
        <div className="mt-[6px] w-[33px] h-[15px] bg-[#dcdcdc]" />
        <div className="mt-[6px] w-[15px] h-[15px] bg-white border border-[#ababab] flex items-center justify-center"><svg width="4" height="7" viewBox="0 0 4 7"><path d="M0 0v7l4-3.5z" fill="#555" /></svg></div>
      </div>

      {/* Status bar */}
      <div className="h-[22px] shrink-0 bg-[#f3f2f1] border-t border-[#d4d4d4] flex items-center pl-[8px] text-[12px] text-[#555] whitespace-nowrap">
        <span className="tracking-[0.1px]">準備完了</span>
        <svg width="13" height="13" viewBox="0 0 13 13" className="ml-[19px]"><circle cx="3" cy="3" r="2.5" fill="#555" /><path d="M6 1h7v12H0V7h13M4 7v6M8 7v6M0 10h13" stroke="#555" fill="none" /></svg>
        <span className="ml-[755px]">平均: 74</span>
        <span className="ml-[19px]">データの個数: 5</span>
        <span className="ml-[17px] w-[279px]">合計: 370</span>
        <div className="w-[20px] h-px bg-[#888]" />
        <span className="ml-[2px] text-[15px] font-bold leading-none">+</span>
        <span className="ml-[6px] text-[13px]">100%</span>
      </div>

      {/* Conditional format menu */}
      <div className="absolute z-20 left-[813px] top-[141px] w-[203px] h-[298px] bg-white border border-[#c6c6c6] shadow-[2px_2px_4px_rgba(0,0,0,0.2)] pt-[2px]">
        <Large t="セルの強調表示ルール" k="H" ic={<svg width="30" height="26" viewBox="0 0 30 26"><rect x=".5" y=".5" width="27" height="20" fill="#fff" stroke="#444" /><rect x="8" y="7" width="13" height="14" fill="#fad7a0" stroke="#f0a030" /><path d="M.5 7h27M.5 14h27M8 .5v20M19 .5v20" stroke="#444" fill="none" /><rect x="13" y="13" width="16" height="13" fill="#fff" stroke="#333" /><path d="M24 16l-6 2.5 6 2.5M18 23h6" fill="none" stroke="#444" /></svg>} />
        <Large t="上位/下位ルール" k="T" ic={<svg width="30" height="26" viewBox="0 0 30 26"><rect x=".5" y=".5" width="27" height="20" fill="#fff" stroke="#444" /><rect x="8" y=".5" width="13" height="21" fill="#fad7a0" stroke="#f0a030" /><path d="M.5 7h27M.5 14h27" stroke="#444" fill="none" /><path d="M14 12V2M11 5l3-3 3 3" stroke="#222" fill="none" /><rect x="12" y="13" width="17" height="13" fill="#fff" stroke="#333" /><text x="20.5" y="23" fontSize="9" textAnchor="middle" fill="#444">10</text></svg>} />
        <div className="h-0 ml-[44px] -mt-[2px] mb-[2px] border-t border-[#e1e1e1]" />
        <Large t="データ バー" k="D" ic={<svg width="28" height="22" viewBox="0 0 28 22"><rect x=".5" y=".5" width="27" height="21" fill="#fff" stroke="#444" /><path d="M.5 7.5h27M.5 14.5h27M4.5 .5v21" stroke="#444" fill="none" opacity=".7" /><rect x="5" y="1" width="8" height="7" fill="#6eaee6" stroke="#1f6fbf" /><rect x="5" y="8" width="3" height="7" fill="#6eaee6" stroke="#1f6fbf" /><rect x="5" y="15" width="7" height="6" fill="#6eaee6" stroke="#1f6fbf" /></svg>} />
        <Large t="カラー スケール" k="S" ic={<svg width="28" height="22" viewBox="0 0 28 22"><rect x="10" y="1" width="9" height="7" fill="#7db7e8" /><rect x="10" y="8" width="9" height="7" fill="#fad7a0" /><rect x="10" y="15" width="9" height="6" fill="#f8a0a0" /><rect x=".5" y=".5" width="27" height="21" fill="none" stroke="#444" /><path d="M.5 7.5h27M.5 14.5h27M9.5 .5v21M22.5 .5v21" stroke="#444" fill="none" /></svg>} />
        <Large dark t="アイコン セット" k="I" ic={<svg width="28" height="22" viewBox="0 0 28 22"><rect x=".5" y=".5" width="27" height="21" fill="#fff" stroke="#444" /><path d="M.5 7.5h27M.5 14.5h27M16 4h6M16 11h6M16 18h6" stroke="#444" fill="none" /><circle cx="8" cy="4" r="1.6" fill="#1f6fbf" /><circle cx="8" cy="11" r="1.6" fill="#e03030" /><circle cx="8" cy="18" r="1.6" fill="#1f6fbf" /></svg>} />
        <div className="mt-px">
          <Small t="新しいルール(" k="N" e=")..." ic={<svg width="15" height="13" viewBox="0 0 15 13"><rect x=".5" y=".5" width="14" height="12" fill="#fff" stroke="#555" /><rect x="4" y="4" width="7" height="5" fill="#f6b26b" /><path d="M.5 4.5h14M.5 8.5h14M4.5 .5v12M10.5 .5v12" stroke="#555" fill="none" /></svg>} />
          <Small t="ルールのクリア(" k="C" e=")" arr ic={<svg width="17" height="15" viewBox="0 0 17 15"><rect x=".5" y=".5" width="14" height="12" fill="#fff" stroke="#555" /><rect x="4" y="4" width="7" height="5" fill="#f6b26b" /><path d="M8 12l6-6 3 3-6 6z" fill="#c06ad0" stroke="#a94fc0" /></svg>} />
          <Small t="ルールの管理(" k="R" e=")..." ic={<svg width="16" height="15" viewBox="0 0 16 15"><path d="M.5 13V.5H13" fill="none" stroke="#555" /><rect x="3.5" y="3.5" width="12" height="11" fill="#fff" stroke="#555" /><rect x="7" y="7" width="5" height="4" fill="#f6b26b" /><path d="M3.5 7h12M3.5 11h12M7 3.5v11M12 3.5v11" stroke="#555" fill="none" /></svg>} />
        </div>
      </div>

      {/* Icon set panel */}
      <div className="absolute z-30 left-[1015px] top-[295px] w-[256px] h-[428px] bg-white border border-[#c6c6c6] shadow-[2px_2px_4px_rgba(0,0,0,0.2)]">
        <SecHead t="方向" />
        <IRow sel l={[<Arr c="g" />, <Arr c="y" a={90} />, <Arr c="r" a={180} />]} r={[<Arr c="k" />, <Arr c="k" a={90} />, <Arr c="k" a={180} />]} />
        <IRow l={[<Tri c="g" />, <Bar />, <Tri c="r" down />]} r={[<Arr c="k" />, <Dia c="k" />, <Dia c="k" a={90} />, <Arr c="k" a={180} />]} />
        <IRow l={[<Arr c="g" />, <Dia c="y" />, <Dia c="y" a={90} />, <Arr c="r" a={180} />]} r={[<Arr c="k" />, <Dia c="k" />, <Arr c="k" a={90} />, <Dia c="k" a={90} />, <Arr c="k" a={180} />]} />
        <IRow l={[<Arr c="g" />, <Dia c="y" />, <Arr c="y" a={90} />, <Dia c="y" a={90} />, <Arr c="r" a={180} />]} />
        <SecHead t="図形" />
        <IRow l={[<Dot c="g" />, <Dot c="y" />, <Dot c="r" />]} r={[<Light c="g" />, <Light c="y" />, <Light c="r" />]} />
        <IRow l={[<Dot c="g" />, <TriS />, <Rhomb />]} r={[<Dot c="g" />, <Dot c="y" />, <Dot c="r" />, <Dot c="d" />]} />
        <IRow l={[<Dot c="r" />, <Dot f={["#efaea2", "#b88a80"]} />, <Dot f={["#adadad", "#8a8a8a"]} />, <Dot c="d" />]} />
        <SecHead t="インジケーター" />
        <IRow l={[<CircI c="g" k="v" />, <CircI c="y" k="!" />, <CircI c="r" k="x" />]} r={[<Check />, <Excl />, <Cross />]} />
        <IRow l={[<Flag c="g" />, <Flag c="y" />, <Flag c="r" />]} />
        <SecHead t="評価" />
        <IRow l={[<Star f={2} />, <Star f={1} />, <Star f={0} />]} r={[<Sig n={1} />, <Sig n={2} />, <Sig n={3} />, <Sig n={4} />]} />
        <IRow l={[<Ball n={4} />, <Ball n={3} />, <Ball n={2} />, <Ball n={1} />, <Ball n={0} />]} r={[<Sig n={0} />, <Sig n={1} />, <Sig n={2} />, <Sig n={3} />, <Sig n={4} />]} />
        <IRow l={[<Quad b={[1, 1, 1, 1]} />, <Quad b={[1, 0, 1, 1]} />, <Quad b={[0, 0, 1, 1]} />, <Quad b={[0, 0, 1, 0]} />, <Quad b={[0, 0, 0, 0]} />]} />
        <div className="mx-px border-t border-[#e1e1e1] h-[26px] pl-[31px] text-[12px] leading-[26px] text-[#666] tracking-[-0.8px]">その他のルール(<span className="underline">M</span>)...</div>
      </div>

      {/* Annotations */}
      <div className="absolute z-40 left-[1011px] top-[313px] w-[136px] h-[36px] border-[7px] border-[#ff0000] rounded-[5px]" />
      <div className="absolute z-40 left-[401px] top-[283px] w-[75px] h-[135px] border-[6px] border-[#ff0000] rounded-[5px]" />
      <div className="absolute z-40 left-[1060px] top-[272px] w-[37px] h-[37px] rounded-full bg-white shadow-[0_1px_4px_rgba(0,0,0,0.35)] flex items-center justify-center">
        <div className="w-[32px] h-[32px] rounded-full border border-[#ff0000] flex items-center justify-center text-[30px] leading-none font-bold text-[#ff0000] font-['Liberation_Sans',sans-serif]">7</div>
      </div>
      <div className="absolute z-40 left-[480px] top-[321px] w-[38px] h-[38px] rounded-full bg-white shadow-[0_1px_4px_rgba(0,0,0,0.35)] flex items-center justify-center">
        <div className="w-[33px] h-[33px] rounded-full border border-[#ff0000] flex items-center justify-center text-[30px] leading-none font-bold text-[#ff0000] font-['Liberation_Sans',sans-serif]">8</div>
      </div>
    </div>
  );
}
